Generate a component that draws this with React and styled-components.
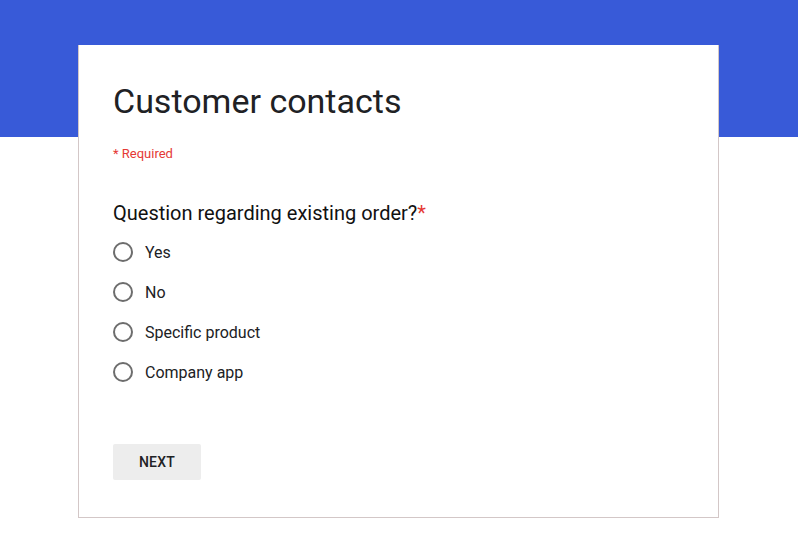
import React from "react";
import styled, { createGlobalStyle } from "styled-components";

const Global = createGlobalStyle`
  html, body { margin: 0; padding: 0; background: #fff; }
  body { font-family: Roboto, "Noto Sans", Arial, sans-serif; }
`;

const Page = styled.div`
  min-height: 553px;
  background: linear-gradient(#385ad8 0, #385ad8 137px, #ffffff 137px);
  padding-top: 45px;
  padding-bottom: 35px;
  box-sizing: border-box;
`;

const Card = styled.div`
  margin-left: 78px;
  width: 641px;
  box-sizing: border-box;
  background: #fff;
  border: 1px solid rgba(130, 95, 95, 0.35);
  border-top: none;
  padding: 35px 34px 37px 34px;
`;

const Title = styled.h1`
  margin: 0;
  font-family: Roboto, sans-serif;
  font-weight: 400;
  font-size: 34px;
  line-height: 42px;
  color: #202124;
`;

const Required = styled.div`
  margin-top: 24px;
  font-size: 13px;
  line-height: 16px;
  color: #e53935;
`;

const Question = styled.div`
  margin-top: 39px;
  font-size: 20px;
  line-height: 24px;
  color: #111;
`;

const Star = styled.span`
  color: #e53935;
`;

const Options = styled.div`
  margin-top: 17px;
  display: flex;
  flex-direction: column;
  gap: 20px;
`;

const Option = styled.label`
  display: flex;
  align-items: center;
  gap: 12px;
  height: 20px;
  font-size: 16px;
  color: #202124;
`;

const Radio = styled.span`
  width: 20px;
  height: 20px;
  box-sizing: border-box;
  border: 2px solid #6d6d6d;
  border-radius: 50%;
  flex: none;
`;

const Button = styled.button`
  margin-top: 62px;
  width: 88px;
  height: 36px;
  border: none;
  border-radius: 2px;
  background: #ededed;
  font-family: Roboto, sans-serif;
  font-weight: 500;
  font-size: 14px;
  color: #202124;
  letter-spacing: 0.2px;
  cursor: pointer;
  display: block;
`;

const options = ["Yes", "No", "Specific product", "Company app"];

export default function App() {
  return (
    <>
      <Global />
      <Page>
        <Card>
          <Title>Customer contacts</Title>
          <Required>* Required</Required>
          <Question>
            Question regarding existing order?<Star>*</Star>
          </Question>
          <Options>
            {options.map((o) => (
              <Option key={o}>
                <Radio />
                {o}
              </Option>
            ))}
          </Options>
          <Button>NEXT</Button>
        </Card>
      </Page>
    </>
  );
}
